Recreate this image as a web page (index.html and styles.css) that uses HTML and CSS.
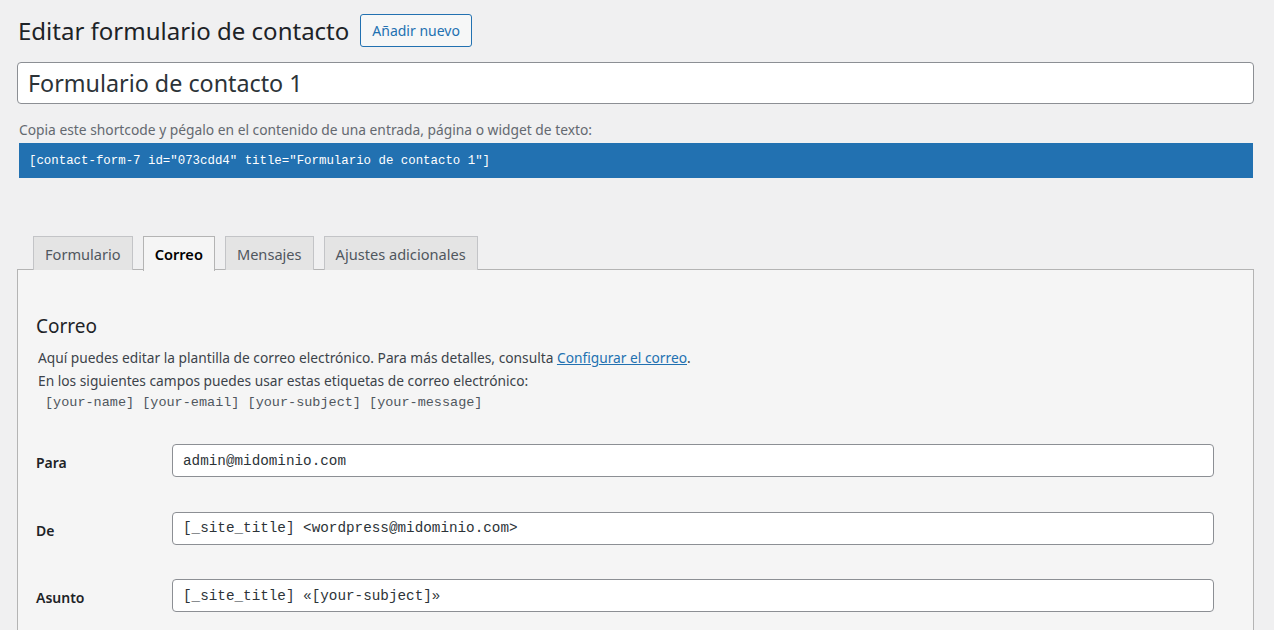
FILE: index.html
```html
<!DOCTYPE html>
<html lang="es">
<head>
<meta charset="utf-8">
<title>Editar formulario de contacto</title>
<link rel="stylesheet" href="styles.css">
</head>
<body>
<div class="wrap">
  <div class="heading">
    <h1>Editar formulario de contacto</h1>
    <a class="add-new" href="#">Añadir nuevo</a>
  </div>
  <div class="title-box">Formulario de contacto 1</div>
  <p class="desc">Copia este shortcode y pégalo en el contenido de una entrada, página o widget de texto:</p>
  <div class="shortcode">[contact-form-7 id="073cdd4" title="Formulario de contacto 1"]</div>

  <div class="tabs">
    <span class="tab">Formulario</span>
    <span class="tab active">Correo</span>
    <span class="tab">Mensajes</span>
    <span class="tab">Ajustes adicionales</span>
  </div>
  <div class="panel">
    <h2>Correo</h2>
    <p class="info">Aquí puedes editar la plantilla de correo electrónico. Para más detalles, consulta <a href="#">Configurar el correo</a>.<br>En los siguientes campos puedes usar estas etiquetas de correo electrónico:</p>
    <p class="tags">[your-name] [your-email] [your-subject] [your-message]</p>
    <div class="fields">
      <div class="row"><span class="label">Para</span><span class="field">admin@midominio.com</span></div>
      <div class="row"><span class="label">De</span><span class="field">[_site_title] &lt;wordpress@midominio.com&gt;</span></div>
      <div class="row"><span class="label">Asunto</span><span class="field">[_site_title] «[your-subject]»</span></div>
    </div>
  </div>
</div>
</body>
</html>
```
FILE: styles.css
```css
html, body {
  margin: 0;
  padding: 0;
  background: #f0f0f1;
  font-family: "Noto Sans", "Open Sans", sans-serif;
  color: #3c434a;
  overflow: hidden;
}
.wrap {
  padding: 14px 20px 0 17px;
}
.heading {
  display: flex;
  align-items: center;
  gap: 11px;
  height: 33px;
}
h1 {
  margin: 0;
  padding-left: 1px;
  font-size: 24px;
  font-weight: 400;
  color: #1d2327;
  line-height: 33px;
}
.add-new {
  box-sizing: border-box;
  height: 33px;
  padding: 0 11px;
  display: flex;
  align-items: center;
  border: 1px solid #2271b1;
  border-radius: 3px;
  background: #f6f7f7;
  color: #2271b1;
  text-decoration: none;
  font-size: 14px;
}
.title-box {
  box-sizing: border-box;
  margin-top: 15px;
  height: 42px;
  border: 1px solid #8c8f94;
  border-radius: 4px;
  background: #fff;
  padding: 0 10px;
  display: flex;
  align-items: center;
  font-size: 23.3px;
  color: #2c3338;
}
.desc {
  margin: 16px 0 4px 2px;
  font-size: 13.8px;
  color: #646970;
  line-height: 19px;
}
.shortcode {
  margin: 0 1px 0 2px;
  height: 35px;
  background: #2271b1;
  color: #fff;
  font-family: "Liberation Mono", "DejaVu Sans Mono", monospace;
  font-size: 12.4px;
  display: flex;
  align-items: center;
  padding-left: 10px;
}
.tabs {
  margin-top: 58px;
  display: flex;
  gap: 10px;
  padding-left: 16px;
  height: 34px;
  position: relative;
  z-index: 1;
}
.tab {
  box-sizing: border-box;
  height: 34px;
  padding: 0 11px;
  border: 1px solid #c3c4c7;
  border-bottom: none;
  background: #e4e4e4;
  color: #50575e;
  font-size: 14.6px;
  display: flex;
  align-items: center;
}
.tab.active {
  background: #f5f5f5;
  color: #000;
  font-weight: 600;
  height: 35px;
  border-color: #b4b4b4;
}
.panel {
  box-sizing: border-box;
  margin-top: -1px;
  border: 1px solid #b4b4b4;
  background: #f5f5f5;
  height: 400px;
  padding: 44px 39px 0 18px;
}
h2 {
  margin: 0;
  font-size: 19px;
  font-weight: 400;
  color: #1d2327;
  line-height: 24px;
}
.info {
  margin: 8px 0 0 2px;
  font-size: 13.75px;
  line-height: 23px;
  color: #3c434a;
}
.info a {
  color: #2271b1;
}
.tags {
  margin: 0 0 0 9px;
  font-family: "Liberation Mono", "DejaVu Sans Mono", monospace;
  font-size: 13.5px;
  line-height: 22px;
  color: #50575e;
}
.fields {
  margin-top: 30px;
  display: flex;
  flex-direction: column;
  gap: 34.5px;
}
.row {
  display: flex;
  align-items: center;
  height: 33px;
}
.label {
  width: 136px;
  font-size: 14px;
  font-weight: 600;
  color: #1d2327;
  padding-top: 4px;
}
.field {
  box-sizing: border-box;
  flex: 1;
  height: 33px;
  border: 1px solid #8c8f94;
  border-radius: 4px;
  background: #fff;
  display: flex;
  align-items: center;
  padding: 0 10px;
  font-family: "Liberation Mono", "DejaVu Sans Mono", monospace;
  font-size: 14.3px;
  color: #2c3338;
}
```
